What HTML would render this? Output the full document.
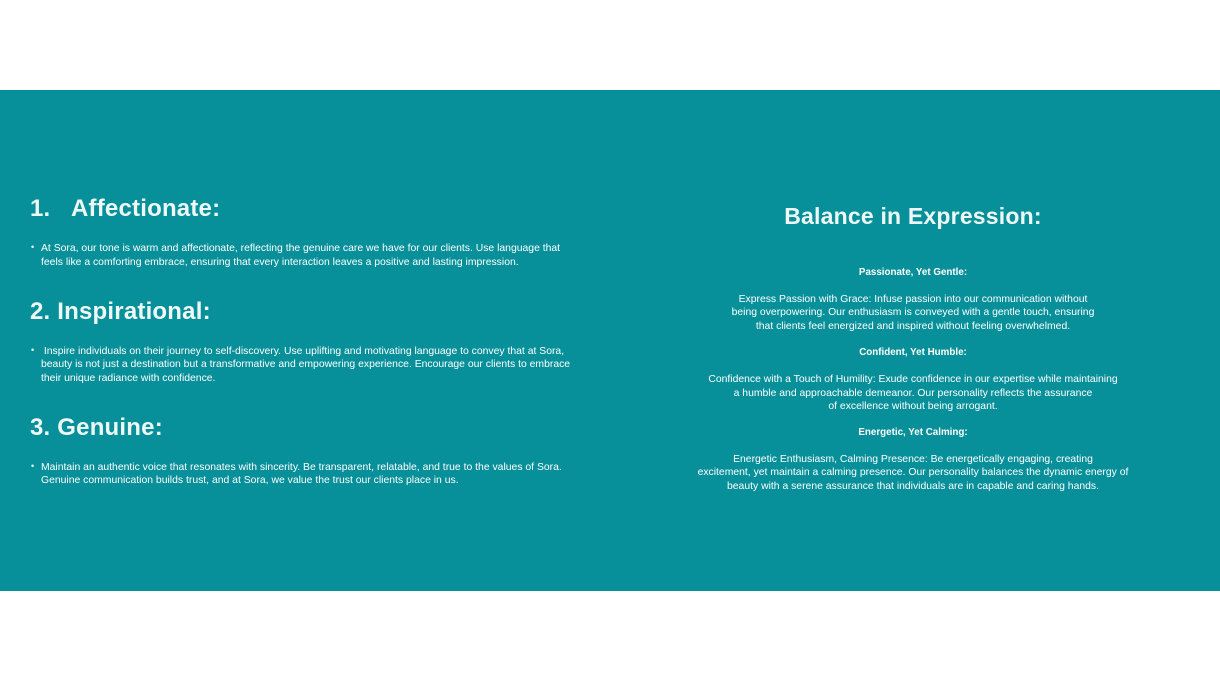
<!DOCTYPE html>
<html><head><meta charset="utf-8"><style>
*{margin:0;padding:0}
body{width:1220px;height:686px;background:#fff;position:relative;overflow:hidden;font-family:"Liberation Sans",sans-serif;color:#fff}
.band{position:absolute;left:0;top:90px;width:1220px;height:501px;background:#07909a}
.l{position:absolute;white-space:nowrap;font-size:10.4px;letter-spacing:0;line-height:13px}
.h{position:absolute;white-space:nowrap;font-size:24px;font-weight:bold;letter-spacing:0.2px;color:#eef9f7}
.c{position:absolute;left:613px;width:600px;text-align:center;white-space:nowrap;font-size:10.4px;letter-spacing:0;line-height:13px}
.b{font-weight:bold;font-size:9.8px}
.dot{position:absolute;font-size:9px}
</style></head><body>
<div class="band"></div>
<div class="h" style="left:30px;top:195px">1.&nbsp;&nbsp;&nbsp;Affectionate:</div>
<div class="dot" style="left:31px;top:242px">•</div>
<div class="l" style="left:41px;top:242px">At Sora, our tone is warm and affectionate, reflecting the genuine care we have for our clients. Use language that</div>
<div class="l" style="left:41px;top:256px">feels like a comforting embrace, ensuring that every interaction leaves a positive and lasting impression.</div>
<div class="h" style="left:30px;top:298px">2. Inspirational:</div>
<div class="dot" style="left:31px;top:345px">•</div>
<div class="l" style="left:41px;top:345px">&nbsp;Inspire individuals on their journey to self-discovery. Use uplifting and motivating language to convey that at Sora,</div>
<div class="l" style="left:41px;top:358px">beauty is not just a destination but a transformative and empowering experience. Encourage our clients to embrace</div>
<div class="l" style="left:41px;top:372px">their unique radiance with confidence.</div>
<div class="h" style="left:30px;top:414px">3. Genuine:</div>
<div class="dot" style="left:31px;top:461px">•</div>
<div class="l" style="left:41px;top:461px">Maintain an authentic voice that resonates with sincerity. Be transparent, relatable, and true to the values of Sora.</div>
<div class="l" style="left:41px;top:474px">Genuine communication builds trust, and at Sora, we value the trust our clients place in us.</div>
<div class="h" style="left:613px;width:600px;text-align:center;top:203px;font-size:23px">Balance in Expression:</div>
<div class="c b" style="top:266px">Passionate, Yet Gentle:</div>
<div class="c" style="top:293px">Express Passion with Grace: Infuse passion into our communication without</div>
<div class="c" style="top:306px">being overpowering. Our enthusiasm is conveyed with a gentle touch, ensuring</div>
<div class="c" style="top:320px">that clients feel energized and inspired without feeling overwhelmed.</div>
<div class="c b" style="top:346px">Confident, Yet Humble:</div>
<div class="c" style="top:373px">Confidence with a Touch of Humility: Exude confidence in our expertise while maintaining</div>
<div class="c" style="top:387px">a humble and approachable demeanor. Our personality reflects the assurance</div>
<div class="c" style="top:400px">of excellence without being arrogant.</div>
<div class="c b" style="top:426px">Energetic, Yet Calming:</div>
<div class="c" style="top:453px">Energetic Enthusiasm, Calming Presence: Be energetically engaging, creating</div>
<div class="c" style="top:466px">excitement, yet maintain a calming presence. Our personality balances the dynamic energy of</div>
<div class="c" style="top:480px">beauty with a serene assurance that individuals are in capable and caring hands.</div>
</body></html>
